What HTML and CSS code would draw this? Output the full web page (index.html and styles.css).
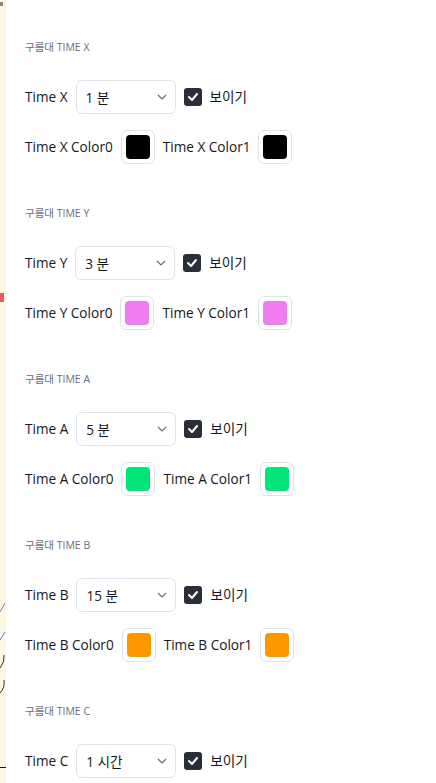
FILE: index.html
```html
<!DOCTYPE html>
<html lang="ko">
<head>
<meta charset="utf-8">
<link rel="stylesheet" href="styles.css">
</head>
<body>
<div class="page">
  <div class="strip">
    <svg width="6" height="783" viewBox="0 0 6 783">
      <rect x="0" y="0" width="6" height="783" fill="#fcf7e1"/>
      <rect x="0" y="2" width="3" height="4" fill="#8a8a8a"/>
      <rect x="0" y="293" width="4" height="9" fill="#f05560"/>
      <path d="M0 612 L5 603" stroke="#6b7bd6" stroke-width="1" fill="none"/>
      <path d="M0 640 L5 632" stroke="#6b7bd6" stroke-width="1" fill="none"/>
      <path d="M0 668 Q5 662 4 655" stroke="#333" stroke-width="1" fill="none"/>
      <path d="M0 693 Q5 688 4 680" stroke="#333" stroke-width="1" fill="none"/>
      <rect x="0" y="767" width="6" height="1" fill="#111"/>
    </svg>
  </div>
  <div class="content">
    <section class="group">
      <div class="group-title">구름대 TIME X</div>
      <div class="row">
        <span class="label">Time X</span>
        <div class="select"><span>1 분</span><svg class="chev" width="10" height="6" viewBox="0 0 10 6"><path d="M1 1 L5 5 L9 1" fill="none" stroke="#6a6d78" stroke-width="1.2"/></svg></div>
        <span class="check"><svg width="12" height="10" viewBox="0 0 12 10"><path d="M2 5 L5 8 L10 2" fill="none" stroke="#fff" stroke-width="2" stroke-linecap="round" stroke-linejoin="round"/></svg></span>
        <span class="label">보이기</span>
      </div>
      <div class="row">
        <span class="label">Time X Color0</span>
        <span class="swatch"><span class="fill c-black"></span></span>
        <span class="label">Time X Color1</span>
        <span class="swatch"><span class="fill c-black"></span></span>
      </div>
    </section>
    <section class="group">
      <div class="group-title">구름대 TIME Y</div>
      <div class="row">
        <span class="label">Time Y</span>
        <div class="select"><span>3 분</span><svg class="chev" width="10" height="6" viewBox="0 0 10 6"><path d="M1 1 L5 5 L9 1" fill="none" stroke="#6a6d78" stroke-width="1.2"/></svg></div>
        <span class="check"><svg width="12" height="10" viewBox="0 0 12 10"><path d="M2 5 L5 8 L10 2" fill="none" stroke="#fff" stroke-width="2" stroke-linecap="round" stroke-linejoin="round"/></svg></span>
        <span class="label">보이기</span>
      </div>
      <div class="row">
        <span class="label">Time Y Color0</span>
        <span class="swatch"><span class="fill c-pink"></span></span>
        <span class="label">Time Y Color1</span>
        <span class="swatch"><span class="fill c-pink"></span></span>
      </div>
    </section>
    <section class="group">
      <div class="group-title">구름대 TIME A</div>
      <div class="row">
        <span class="label">Time A</span>
        <div class="select"><span>5 분</span><svg class="chev" width="10" height="6" viewBox="0 0 10 6"><path d="M1 1 L5 5 L9 1" fill="none" stroke="#6a6d78" stroke-width="1.2"/></svg></div>
        <span class="check"><svg width="12" height="10" viewBox="0 0 12 10"><path d="M2 5 L5 8 L10 2" fill="none" stroke="#fff" stroke-width="2" stroke-linecap="round" stroke-linejoin="round"/></svg></span>
        <span class="label">보이기</span>
      </div>
      <div class="row">
        <span class="label">Time A Color0</span>
        <span class="swatch"><span class="fill c-green"></span></span>
        <span class="label">Time A Color1</span>
        <span class="swatch"><span class="fill c-green"></span></span>
      </div>
    </section>
    <section class="group">
      <div class="group-title">구름대 TIME B</div>
      <div class="row">
        <span class="label">Time B</span>
        <div class="select"><span>15 분</span><svg class="chev" width="10" height="6" viewBox="0 0 10 6"><path d="M1 1 L5 5 L9 1" fill="none" stroke="#6a6d78" stroke-width="1.2"/></svg></div>
        <span class="check"><svg width="12" height="10" viewBox="0 0 12 10"><path d="M2 5 L5 8 L10 2" fill="none" stroke="#fff" stroke-width="2" stroke-linecap="round" stroke-linejoin="round"/></svg></span>
        <span class="label">보이기</span>
      </div>
      <div class="row">
        <span class="label">Time B Color0</span>
        <span class="swatch"><span class="fill c-orange"></span></span>
        <span class="label">Time B Color1</span>
        <span class="swatch"><span class="fill c-orange"></span></span>
      </div>
    </section>
    <section class="group">
      <div class="group-title">구름대 TIME C</div>
      <div class="row">
        <span class="label">Time C</span>
        <div class="select"><span>1 시간</span><svg class="chev" width="10" height="6" viewBox="0 0 10 6"><path d="M1 1 L5 5 L9 1" fill="none" stroke="#6a6d78" stroke-width="1.2"/></svg></div>
        <span class="check"><svg width="12" height="10" viewBox="0 0 12 10"><path d="M2 5 L5 8 L10 2" fill="none" stroke="#fff" stroke-width="2" stroke-linecap="round" stroke-linejoin="round"/></svg></span>
        <span class="label">보이기</span>
      </div>
    </section>
  </div>
</div>
</body>
</html>
```

FILE: styles.css
```css
html, body {
  margin: 0;
  padding: 0;
  background: #fff;
  height: 783px;
  overflow: hidden;
}
body {
  font-family: "Open Sans", "Noto Sans CJK KR", sans-serif;
  font-size: 13.6px;
  color: #131722;
}
.page {
  display: flex;
  height: 783px;
}
.strip {
  width: 6px;
  flex: none;
  line-height: 0;
}
.content {
  flex: 1;
  padding: 39px 0 0 19px;
  display: flex;
  flex-direction: column;
  gap: 41px;
}
.group {
  display: flex;
  flex-direction: column;
}
.group-title {
  height: 16px;
  line-height: 16px;
  font-size: 10.5px;
  color: #6a6d78;
  margin-bottom: 25px;
}
.row {
  display: flex;
  align-items: center;
  gap: 8px;
  height: 34px;
}
.row + .row {
  margin-top: 16px;
}
.label {
  white-space: nowrap;
  line-height: 18px;
}
.select {
  box-sizing: border-box;
  width: 100px;
  height: 34px;
  border: 1px solid #e0e3eb;
  border-radius: 6px;
  display: flex;
  align-items: center;
  justify-content: space-between;
  padding: 0 8px 0 9px;
}
.chev {
  display: block;
}
.check {
  width: 18px;
  height: 18px;
  border-radius: 3px;
  background: #2a2e39;
  display: flex;
  align-items: center;
  justify-content: center;
}
.swatch {
  box-sizing: border-box;
  width: 34px;
  height: 34px;
  border: 1px solid #e0e3eb;
  border-radius: 6px;
  display: flex;
  align-items: center;
  justify-content: center;
}
.fill {
  width: 24px;
  height: 24px;
  border-radius: 4px;
}
.c-black { background: #000000; }
.c-pink { background: #f07cf2; }
.c-green { background: #00e676; }
.c-orange { background: #ff9800; }
```
